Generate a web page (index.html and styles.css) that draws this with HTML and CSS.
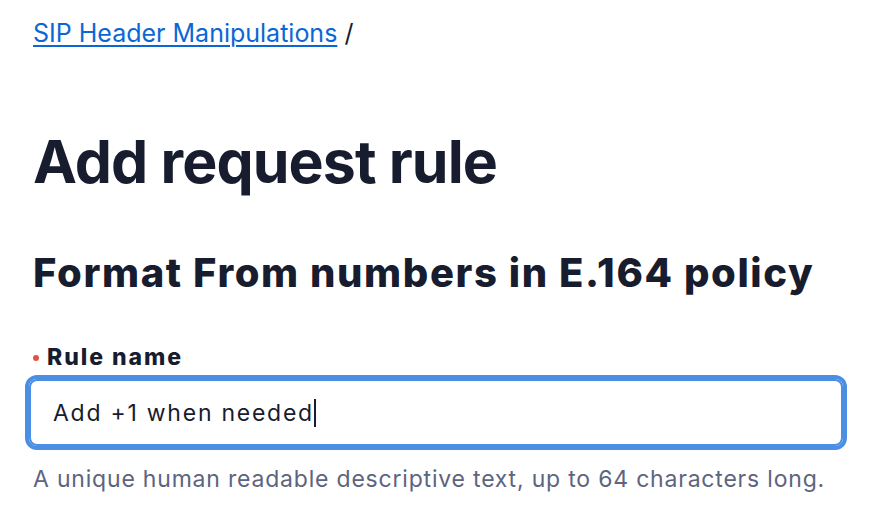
FILE: index.html
```html
<!DOCTYPE html>
<html lang="en">
<head>
<meta charset="utf-8">
<title>Add request rule</title>
<link rel="stylesheet" href="styles.css">
</head>
<body>
<main class="page">
  <nav class="crumbs"><a href="#" class="crumb-link">SIP Header Manipulations</a> <span class="crumb-sep">/</span></nav>
  <h1 class="title">Add request rule</h1>
  <h2 class="subtitle">Format From numbers in E.164 policy</h2>
  <div class="field">
    <label class="label"><span class="req"></span>Rule name</label>
    <div class="input"><span class="input-text">Add +1 when needed</span><span class="caret"></span></div>
    <p class="help">A unique human readable descriptive text, up to 64 characters long.</p>
  </div>
</main>
</body>
</html>
```
FILE: styles.css
```css
html, body {
  margin: 0;
  padding: 0;
  background: #ffffff;
}
.page {
  font-family: Inter, "Noto Sans", sans-serif;
  padding: 17px 39px 0 33px;
  color: #171c2e;
}
.crumbs {
  font-size: 25px;
  line-height: 32px;
  color: #171c2e;
}
.crumb-link {
  color: #0b67d6;
  text-decoration: underline;
  text-underline-offset: 3px;
  text-decoration-thickness: 1.5px;
}
.title {
  margin: 81px 0 0;
  font-size: 59px;
  line-height: 64px;
  font-weight: 700;
  letter-spacing: -0.9px;
}
.subtitle {
  margin: 55px 0 0;
  font-size: 40px;
  line-height: 48px;
  font-weight: 800;
  letter-spacing: 1.6px;
}
.field {
  margin-top: 45px;
}
.label {
  display: flex;
  align-items: center;
  font-size: 23px;
  line-height: 30px;
  font-weight: 800;
  letter-spacing: 1.95px;
}
.req {
  width: 6px;
  height: 6px;
  border-radius: 50%;
  background: #e0524a;
  margin-right: 8px;
  margin-top: 1px;
}
.input {
  margin: 7px 0 0 -4px;
  border: 2px solid #4a8fe3;
  box-shadow: 0 0 0 4px #4a8fe3;
  border-radius: 8px;
  padding: 17px 22px 16px;
  font-size: 23px;
  line-height: 30px;
  letter-spacing: 1.75px;
  color: #171c2e;
  display: flex;
  align-items: center;
}
.caret {
  display: inline-block;
  width: 2px;
  height: 28px;
  background: #171c2e;
  margin-left: 0;
}
.help {
  margin: 18px 0 0;
  font-size: 23px;
  line-height: 30px;
  letter-spacing: 0.8px;
  color: #5d6480;
}
```
